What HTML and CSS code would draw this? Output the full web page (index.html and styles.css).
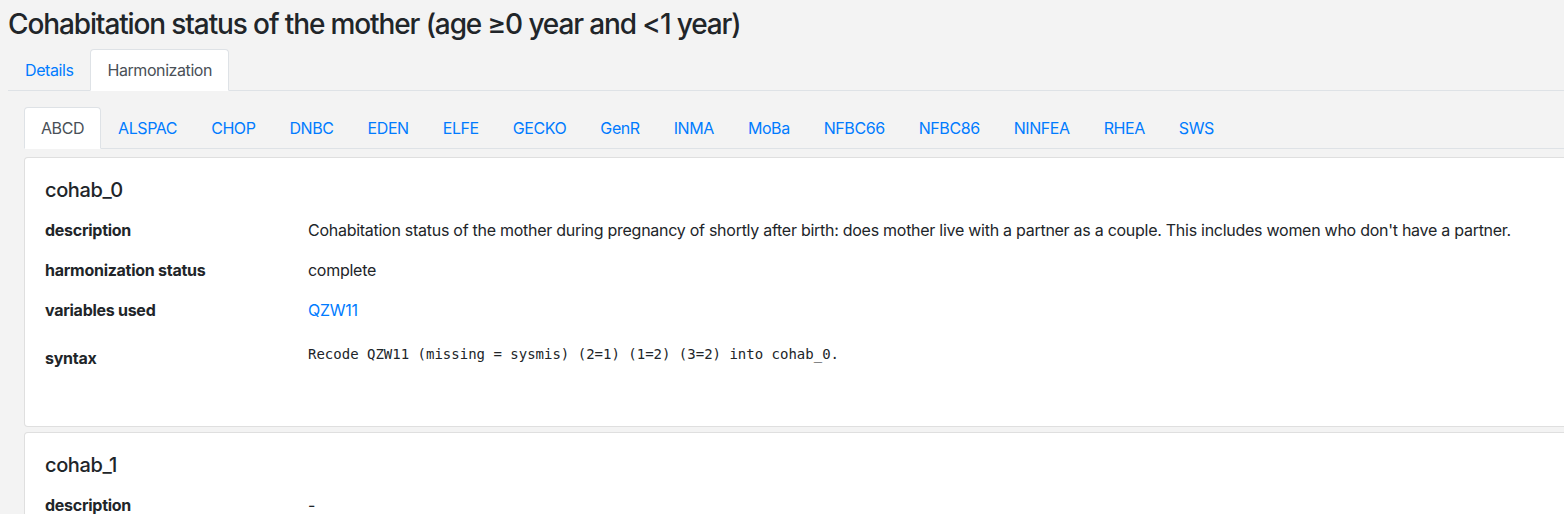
FILE: index.html
```html
<!DOCTYPE html>
<html lang="en">
<head>
<meta charset="utf-8">
<title>Cohabitation status of the mother</title>
<link rel="stylesheet" href="styles.css">
</head>
<body>
<div class="page">
  <h3 class="title">Cohabitation status of the mother (age ≥0 year and &lt;1 year)</h3>
  <ul class="tabs outer">
    <li><a class="tab-link" href="#">Details</a></li>
    <li><a class="tab-link active" href="#">Harmonization</a></li>
  </ul>
  <div class="tab-content">
    <ul class="tabs inner">
      <li><a class="tab-link active" href="#">ABCD</a></li>
      <li><a class="tab-link" href="#">ALSPAC</a></li>
      <li><a class="tab-link" href="#">CHOP</a></li>
      <li><a class="tab-link" href="#">DNBC</a></li>
      <li><a class="tab-link" href="#">EDEN</a></li>
      <li><a class="tab-link" href="#">ELFE</a></li>
      <li><a class="tab-link" href="#">GECKO</a></li>
      <li><a class="tab-link" href="#">GenR</a></li>
      <li><a class="tab-link" href="#">INMA</a></li>
      <li><a class="tab-link" href="#">MoBa</a></li>
      <li><a class="tab-link" href="#">NFBC66</a></li>
      <li><a class="tab-link" href="#">NFBC86</a></li>
      <li><a class="tab-link" href="#">NINFEA</a></li>
      <li><a class="tab-link" href="#">RHEA</a></li>
      <li><a class="tab-link" href="#">SWS</a></li>
    </ul>
    <div class="cards">
      <div class="card">
        <h5 class="card-title">cohab_0</h5>
        <div class="row"><div class="label">description</div><div class="value">Cohabitation status of the mother during pregnancy of shortly after birth: does mother live with a partner as a couple. This includes women who don't have a partner.</div></div>
        <div class="row"><div class="label">harmonization status</div><div class="value">complete</div></div>
        <div class="row"><div class="label">variables used</div><div class="value"><a class="link" href="#">QZW11</a></div></div>
        <div class="row syntax"><div class="label">syntax</div><div class="value"><pre class="code">Recode QZW11 (missing = sysmis) (2=1) (1=2) (3=2) into cohab_0.</pre></div></div>
      </div>
      <div class="card">
        <h5 class="card-title">cohab_1</h5>
        <div class="row"><div class="label">description</div><div class="value">-</div></div>
      </div>
    </div>
  </div>
</div>
</body>
</html>
```

FILE: styles.css
```css
html, body {
  margin: 0;
  padding: 0;
  overflow: hidden;
  background: #f3f3f3;
}
body {
  font-family: Inter, "Liberation Sans", Arial, sans-serif;
  font-size: 16px;
  line-height: 1.5;
  letter-spacing: -0.27px;
  color: #212529;
}
.page {
  padding: 8px 0 0 8px;
}
.title {
  margin: 0 0 8px 0;
  font-size: 28px;
  font-weight: 500;
  line-height: 33px;
  letter-spacing: -1.12px;
  color: #212529;
}
.tabs {
  list-style: none;
  margin: 0;
  padding: 0;
  display: flex;
  border-bottom: 1px solid #dee2e6;
}
.tab-link {
  display: block;
  padding: 8px 16px;
  border: 1px solid transparent;
  border-top-left-radius: 4px;
  border-top-right-radius: 4px;
  margin-bottom: -1px;
  color: #007bff;
  text-decoration: none;
  line-height: 24px;
  letter-spacing: -0.42px;
}
.tab-link.active {
  background: #fff;
  color: #495057;
  border-color: #dee2e6 #dee2e6 #fff;
}
.tab-content {
  padding: 16px 0 0 16px;
}
.cards {
  padding-top: 8px;
  display: flex;
  flex-direction: column;
  gap: 5px;
  width: 1700px;
}
.card {
  background: #fff;
  border: 1px solid rgba(0, 0, 0, 0.125);
  border-radius: 4px;
  padding: 20px;
}
.card-title {
  margin: 0 0 8px 0;
  font-size: 20px;
  font-weight: 500;
  line-height: 24px;
  letter-spacing: -0.4px;
}
.row {
  display: flex;
  align-items: center;
  height: 40px;
}
.label {
  width: 263px;
  flex: none;
  font-weight: 700;
}
.value {
  white-space: nowrap;
}
.row.syntax {
  align-items: flex-start;
  height: 76px;
}
.row.syntax .label {
  padding-top: 16px;
}
.code {
  margin: 0;
  padding-top: 14px;
  font-family: "DejaVu Sans Mono", monospace;
  font-size: 14px;
  line-height: 20px;
  letter-spacing: 0;
  color: #212529;
}
.link {
  color: #007bff;
  text-decoration: none;
}
```
